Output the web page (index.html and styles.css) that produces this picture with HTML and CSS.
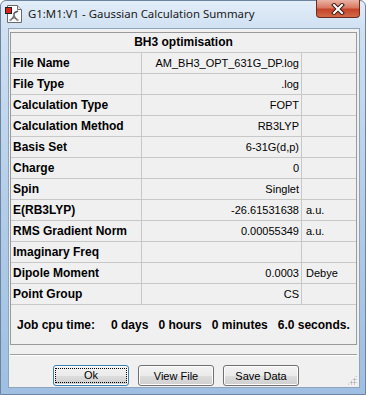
FILE: index.html
```html
<!doctype html>
<html lang="en">
<head>
  <meta charset="UTF-8">
  <meta name="viewport" content="width=device-width, initial-scale=1.0">
  <title>Gaussian Calculation Summary</title>
  <link rel="stylesheet" href="styles.css">
</head>
<body>
  <div class="window">
    <div class="titlebar">
      <svg class="app-icon" width="20" height="20" viewBox="0 0 20 20">
        <path d="M3.5 1.5 H13.5 L17.5 5.5 V18.5 H3.5 Z" fill="#fff" stroke="#6b6b6b"/>
        <path d="M13.5 1.5 V5.5 H17.5" fill="#e8e8e8" stroke="#6b6b6b"/>
        <path d="M10 9 L10 13 M10 13 L6.5 16 M10 13 L13.5 16 M10 9 L14 7" stroke="#555" stroke-width="1.4" fill="none"/>
        <circle cx="10" cy="13" r="1.6" fill="#777"/>
        <circle cx="6.5" cy="16" r="1.2" fill="#999"/>
        <circle cx="13.5" cy="16" r="1.2" fill="#999"/>
        <rect x="1.5" y="3.5" width="6" height="6" fill="#e0201a" stroke="#222"/>
      </svg>
      <span class="title">G1:M1:V1 - Gaussian Calculation Summary</span>
      <div class="close">
        <svg width="16" height="12" viewBox="0 0 16 12">
          <path d="M4 2 L12 10 M12 2 L4 10" stroke="#3a1a14" stroke-width="4" stroke-linecap="square"/>
          <path d="M4 2 L12 10 M12 2 L4 10" stroke="#fff" stroke-width="2" stroke-linecap="square"/>
        </svg>
      </div>
    </div>

    <div class="client">
      <div class="summary">
        <div class="heading">BH3 optimisation</div>
        <div class="row"><div class="label">File Name</div><div class="value">AM_BH3_OPT_631G_DP.log</div><div class="unit"></div></div>
        <div class="row"><div class="label">File Type</div><div class="value">.log</div><div class="unit"></div></div>
        <div class="row"><div class="label">Calculation Type</div><div class="value">FOPT</div><div class="unit"></div></div>
        <div class="row"><div class="label">Calculation Method</div><div class="value">RB3LYP</div><div class="unit"></div></div>
        <div class="row"><div class="label">Basis Set</div><div class="value">6-31G(d,p)</div><div class="unit"></div></div>
        <div class="row"><div class="label">Charge</div><div class="value">0</div><div class="unit"></div></div>
        <div class="row"><div class="label">Spin</div><div class="value">Singlet</div><div class="unit"></div></div>
        <div class="row"><div class="label">E(RB3LYP)</div><div class="value">-26.61531638</div><div class="unit">a.u.</div></div>
        <div class="row"><div class="label">RMS Gradient Norm</div><div class="value">0.00055349</div><div class="unit">a.u.</div></div>
        <div class="row"><div class="label">Imaginary Freq</div><div class="value"></div><div class="unit"></div></div>
        <div class="row"><div class="label">Dipole Moment</div><div class="value">0.0003</div><div class="unit">Debye</div></div>
        <div class="row"><div class="label">Point Group</div><div class="value">CS</div><div class="unit"></div></div>
        <div class="cpu">
          <span class="cpu-label">Job cpu time:</span>
          <span>0 days</span>
          <span>0 hours</span>
          <span>0 minutes</span>
          <span>6.0 seconds.</span>
        </div>
      </div>

      <div class="separator"></div>

      <div class="buttons">
        <button class="btn default"><span>Ok</span></button>
        <button class="btn"><span>View File</span></button>
        <button class="btn"><span>Save Data</span></button>
      </div>
      <div class="grip"></div>
    </div>
  </div>
</body>
</html>
```

FILE: styles.css
```css
html, body {
    margin: 0;
    padding: 0;
}
body {
    width: 366px;
    height: 395px;
    overflow: hidden;
    font-family: "Liberation Sans", Arial, sans-serif;
}
.window {
    position: relative;
    width: 366px;
    height: 395px;
    box-sizing: border-box;
    border: 1px solid #6d84a0;
    border-radius: 6px 6px 0 0;
    background: linear-gradient(to bottom, #e2edf8 0px, #cfe0f2 30px, #b3cde9 200px, #9fbfe2 395px);
}
.titlebar {
    height: 27px;
    display: flex;
    align-items: center;
    padding-left: 3px;
}
.app-icon {
    flex: none;
    margin-top: -1px;
}
.title {
    margin-left: 4px;
    font-family: "Noto Sans", "Open Sans", sans-serif;
    font-size: 11.4px;
    color: #1a1a1a;
    margin-top: -3px;
}
.close {
    position: absolute;
    top: -1px;
    right: 5px;
    width: 44px;
    height: 18px;
    box-sizing: border-box;
    border: 1px solid #6b2b22;
    border-top: none;
    border-radius: 0 0 4px 4px;
    background: linear-gradient(to bottom, #eab3a5 0%, #d97a62 45%, #c4442a 55%, #d36a48 100%);
    display: flex;
    align-items: center;
    justify-content: center;
}
.client {
    position: relative;
    margin-left: 7px;
    width: 352px;
    height: 360px;
    box-sizing: border-box;
    background: #f0f0f0;
    border: 1px solid #8ea4bd;
    padding: 3px 2px 0 1px;
}
.summary {
    width: 347px;
    box-sizing: border-box;
    border: 1px solid #9a9a9a;
    background: #f0f0f0;
}
.heading {
    height: 20px;
    box-sizing: border-box;
    border-bottom: 1px solid #c8c8c8;
    text-align: center;
    font-weight: bold;
    font-size: 12px;
    line-height: 19px;
}
.row {
    display: grid;
    grid-template-columns: 131px 160px 1fr;
    height: 21px;
}
.row > div {
    box-sizing: border-box;
    border-bottom: 1px solid #c8c8c8;
    line-height: 20px;
    white-space: nowrap;
    overflow: hidden;
}
.label {
    border-right: 1px solid #c8c8c8;
    padding-left: 2px;
    font-weight: bold;
    font-size: 12px;
}
.value {
    border-right: 1px solid #c8c8c8;
    padding-right: 2px;
    text-align: right;
    font-size: 11px;
}
.unit {
    padding-left: 4px;
    font-size: 11px;
}
.cpu {
    height: 39px;
    display: flex;
    align-items: center;
    gap: 10px;
    padding-left: 6px;
    box-sizing: border-box;
    font-weight: bold;
    font-size: 12px;
}
.cpu-label {
    margin-right: 6px;
}
.separator {
    width: 347px;
    margin-top: 9px;
    border-top: 1px solid #a0a0a0;
    border-bottom: 1px solid #ffffff;
}
.buttons {
    display: flex;
    gap: 9px;
    margin-top: 9px;
    padding-left: 43px;
}
.btn {
    width: 76px;
    height: 21px;
    padding: 0;
    box-sizing: border-box;
    border: 1px solid #707070;
    border-radius: 3px;
    background: linear-gradient(to bottom, #f2f2f2 0%, #ebebeb 50%, #dddddd 51%, #cfcfcf 100%);
    font-family: "Liberation Sans", Arial, sans-serif;
    font-size: 11px;
    color: #000;
    box-shadow: inset 0 0 0 1px #fcfcfc;
}
.btn.default {
    border-color: #3c7fb1;
}
.btn.default span {
    display: block;
    margin: 2px;
    height: 13px;
    line-height: 13px;
    outline: 1px dotted #000;
}
.grip {
    position: absolute;
    right: 2px;
    bottom: 2px;
    width: 10px;
    height: 10px;
    background:
        radial-gradient(circle, #a8a8a8 0.8px, transparent 1.2px) 0 0 / 3px 3px;
    clip-path: polygon(100% 0, 100% 100%, 0 100%);
}
```
